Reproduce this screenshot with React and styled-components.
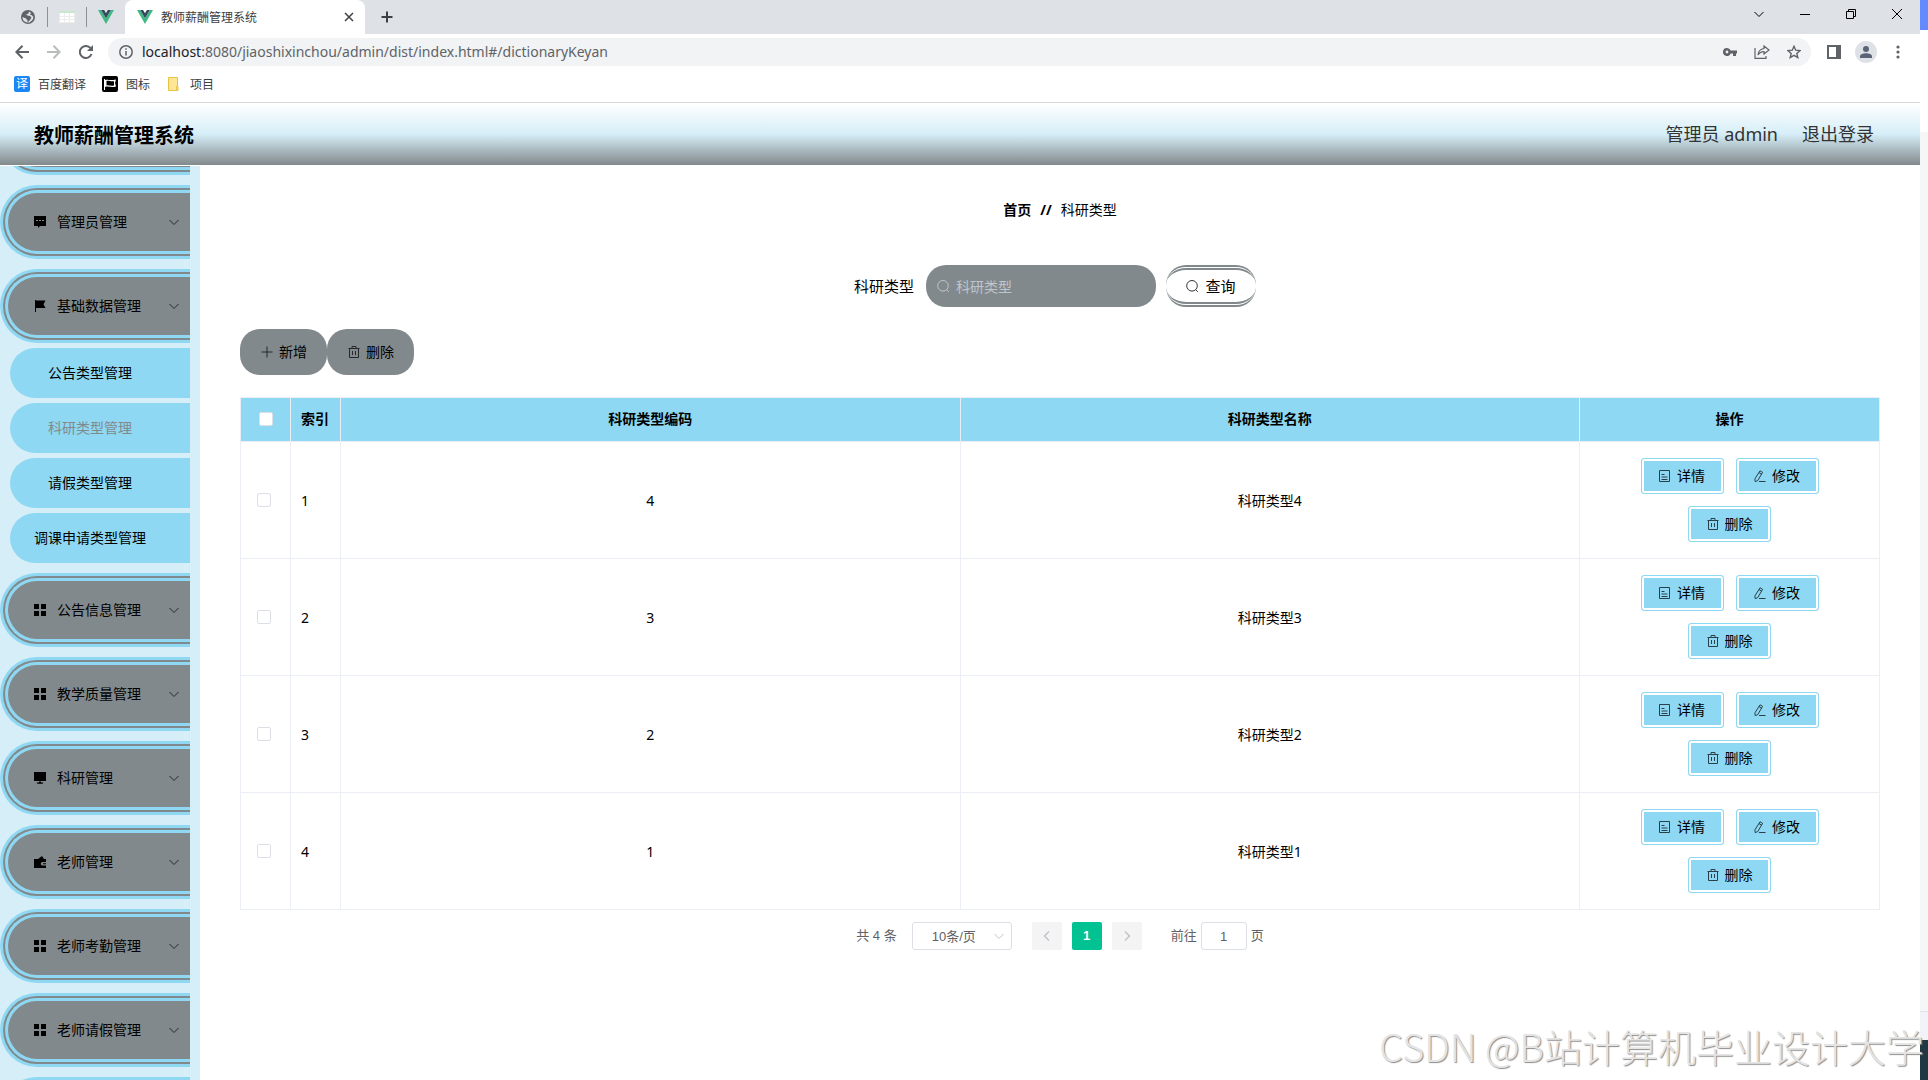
import React, { useEffect, useRef } from 'react'
import styled, { createGlobalStyle } from 'styled-components'

const menus = [
  { name: '', label: '个人中心', icon: '' },
  { name: '管理员管理', icon: 'chat' },
  {
    name: '基础数据管理',
    icon: 'flag',
    children: ['公告类型管理', '科研类型管理', '请假类型管理', '调课申请类型管理'],
  },
  { name: '公告信息管理', icon: 'grid' },
  { name: '教学质量管理', icon: 'grid' },
  { name: '科研管理', icon: 'monitor' },
  { name: '老师管理', icon: 'wallet' },
  { name: '老师考勤管理', icon: 'grid' },
  { name: '老师请假管理', icon: 'grid' },
  { name: '', label: '老师薪资管理', icon: '' },
]

const rows = [
  { id: 1, code: 4, name: '科研类型4' },
  { id: 2, code: 3, name: '科研类型3' },
  { id: 3, code: 2, name: '科研类型2' },
  { id: 4, code: 1, name: '科研类型1' },
]

// filled icons of the side menu, 12 x 12
const menuIcons = {
  grid: <path d="M0 0h5v5H0zM7 0h5v5H7zM0 7h5v5H0zM7 7h5v5H7z" />,
  chat: (
    <>
      <path d="M0 0h12v10H6l-2 2v-2H0z" />
      <path d="M2 4h2v1H2zM5 4h2v1H5zM8 4h2v1H8z" fill="#82898c" />
    </>
  ),
  flag: <path d="M1 0h1v12H1zM2 0.5h9.5L9.5 4.2l2 3.8H2z" />,
  monitor: <path d="M0 0h12v9H0zM5 9.500h2v1h2v1.200H3v-1.200h2z" />,
  wallet: <path d="M0 3h4l4-3 2 3h2v3H8.500a1.500 1.500 0 0 0 0 3.500H12V12H0zM9 7.200h3v1H9z" />,
}

function MenuIcon({ type }) {
  return (
    <svg width="12" height="12" viewBox="0 0 12 12" aria-hidden="true">
      {menuIcons[type]}
    </svg>
  )
}

const linePaths = {
  plus: 'M6 0.500v11M0.500 6h11',
  trash: 'M0.500 2.500h11M4 2.500v-2h4v2M1.500 2.500v9h9v-9M4.500 5v4M7.500 5v4',
  doc: 'M0.500 0.500h10v11h-10zM2.500 4.500h3M2.500 7h6M2.500 9.500h6',
  edit: 'M6 0.800l2.600 1.500-4.800 8.200-2.600 1.200-.3-2.800zM5 2.600l2.600 1.500M5 11.500h6.500',
  search: 'M6 0.500a5.300 5.300 0 1 1 0 10.600a5.300 5.300 0 1 1 0-10.600M9.800 9.800l2 2',
  down: 'M1.500 4l4.500 4.500L10.500 4',
  left: 'M8 1.500L3.500 6L8 10.500',
  right: 'M4 1.500L8.500 6L4 10.500',
  close: 'M2 2l8 8M10 2l-8 8',
}

function LineIcon({ type, size = 12, width = 1, opacity = 1 }) {
  return (
    <svg width={size} height={size} viewBox="0 0 12 12" fill="none" stroke="currentColor" strokeWidth={width} opacity={opacity} aria-hidden="true">
      <path d={linePaths[type]} />
    </svg>
  )
}

function VueLogo() {
  return (
    <svg width="16" height="14" viewBox="0 0 16 14" aria-hidden="true">
      <path d="M0 0h3.200L8 8.300L12.800 0H16L8 14z" fill="#41b883" />
      <path d="M3.200 0H6.100L8 3.300L9.900 0h2.900L8 8.300z" fill="#35495e" />
    </svg>
  )
}

function Browser() {
  return (
    <>
      <TabBar>
        <PinnedTab>
          <svg width="14" height="14" viewBox="0 0 14 14" aria-hidden="true">
            <circle cx="7" cy="7" r="7" fill="#5f6368" />
            <path d="M8 1.500l-.5 2L5 4.500l1.500 1L9 6l1.500 1.500L9 10l-2.500 2.500v-2L5 8.500 1.500 7A5.600 5.600 0 0 0 6 12.500h2.500l3-2.500 1-3-2-2H9L10 3z" fill="#dee1e6" />
          </svg>
        </PinnedTab>
        <PinnedTab>
          <svg width="16" height="12" viewBox="0 0 16 12" aria-hidden="true">
            <path d="M0 0h16v12H0z" fill="#fff" />
            <path d="M0 0h16v2H0z" fill="#c9e6cf" />
            <path d="M0.500 2v9.500h15V2M0 5.500h16M0 8.500h16M5.500 2v10M10.500 2v10" fill="none" stroke="#ececec" />
          </svg>
        </PinnedTab>
        <PinnedTab $last>
          <VueLogo />
        </PinnedTab>
        <ActiveTab>
          <VueLogo />
          <TabTitle>教师薪酬管理系统</TabTitle>
          <PlainButton aria-label="关闭标签页">
            <LineIcon type="close" width={1.5} />
          </PlainButton>
        </ActiveTab>
        <NewTab aria-label="新标签页">
          <LineIcon type="plus" width={2} />
        </NewTab>
        <WindowButtons>
          <WindowButton aria-label="搜索标签页">
            <LineIcon type="down" />
          </WindowButton>
          <WindowButton aria-label="最小化">
            <svg width="10" height="10" viewBox="0 0 10 10"><path d="M0 5h10v1H0z" /></svg>
          </WindowButton>
          <WindowButton aria-label="还原">
            <svg width="10" height="10" viewBox="0 0 10 10" fill="none" stroke="#000">
              <path d="M0.500 2.500h7v7h-7zM2.500 2.500v-2h7v7h-2" />
            </svg>
          </WindowButton>
          <WindowButton aria-label="关闭">
            <svg width="10" height="10" viewBox="0 0 10 10" stroke="#000"><path d="M0 0l10 10M10 0L0 10" /></svg>
          </WindowButton>
        </WindowButtons>
      </TabBar>
      <Toolbar>
        <ToolButton aria-label="后退">
          <svg width="14" height="14" viewBox="0 0 14 14" fill="none" stroke="#5f6368" strokeWidth="2"><path d="M14 7H1.500M7.500 0.800L1.400 7l6.100 6.200" /></svg>
        </ToolButton>
        <ToolButton aria-label="前进">
          <svg width="14" height="14" viewBox="0 0 14 14" fill="none" stroke="#babcbe" strokeWidth="2"><path d="M0 7h12.500M6.500 0.800L12.600 7l-6.100 6.200" /></svg>
        </ToolButton>
        <ToolButton aria-label="刷新">
          <svg width="14" height="14" viewBox="0 0 14 14"><path d="M12.500 9A6 6 0 1 1 11.500 3.200" fill="none" stroke="#5f6368" strokeWidth="2" /><path d="M14 0v6H8z" fill="#5f6368" /></svg>
        </ToolButton>
        <AddressBar>
          <svg width="14" height="14" viewBox="0 0 14 14" fill="none" stroke="#5f6368" strokeWidth="1.500" aria-hidden="true">
            <circle cx="7" cy="7" r="6.200" />
            <path d="M7 6v4.500M7 3.300v1.500" />
          </svg>
          <Url>
            <b>localhost</b>:8080/jiaoshixinchou/admin/dist/index.html#/dictionaryKeyan
          </Url>
          <ToolButton aria-label="密码">
            <svg width="14" height="8" viewBox="0 0 14 8" fill="#5f6368"><path fillRule="evenodd" d="M4 0a4 4 0 0 1 3.700 2.600H14v2.800h-1V8h-3V5.400H7.700A4 4 0 1 1 4 0zM4 2.600a1.400 1.400 0 1 0 0 2.800a1.400 1.400 0 1 0 0-2.800z" /></svg>
          </ToolButton>
          <ToolButton aria-label="分享">
            <svg width="16" height="14" viewBox="0 0 16 14" fill="none" stroke="#5f6368" strokeWidth="1.200"><path d="M1 3v10.400h11V11M10 1l5 4-5 4V6.700C7 6.700 5.500 7.500 4 10c.3-3.500 2.500-6 6-6.500z" /></svg>
          </ToolButton>
          <ToolButton aria-label="收藏">
            <svg width="14" height="14" viewBox="0 0 14 14" fill="none" stroke="#5f6368" strokeWidth="1.400"><path d="M7 1.300l1.700 3.900 4.300.4-3.200 2.800 1 4.200L7 10.400l-3.800 2.200 1-4.200L1 5.600l4.300-.4z" /></svg>
          </ToolButton>
        </AddressBar>
        <ToolButton aria-label="侧边栏">
          <svg width="14" height="14" viewBox="0 0 14 14"><path d="M0 0h14v14H0z" fill="#5f6368" /><path d="M2 2h7v10H2z" fill="#fff" /></svg>
        </ToolButton>
        <ToolButton aria-label="用户">
          <svg width="22" height="22" viewBox="0 0 22 22"><circle cx="11" cy="11" r="11" fill="#dee1e6" /><circle cx="11" cy="8" r="3" fill="#5a6378" /><path d="M5 17v-1.500c0-2 3-3.200 6-3.200s6 1.200 6 3.200V17z" fill="#5a6378" /></svg>
        </ToolButton>
        <ToolButton aria-label="更多">
          <svg width="4" height="14" viewBox="0 0 4 14" fill="#5f6368"><circle cx="2" cy="2" r="1.600" /><circle cx="2" cy="7" r="1.600" /><circle cx="2" cy="12" r="1.600" /></svg>
        </ToolButton>
      </Toolbar>
      <Bookmarks>
        <Bookmark href="#fanyi">
          <Badge>译</Badge>
          百度翻译
        </Bookmark>
        <Bookmark href="#tubiao">
          <svg width="16" height="16" viewBox="0 0 16 16" aria-hidden="true">
            <rect width="16" height="16" rx="2" />
            <path d="M2.500 3v11" stroke="#fff" />
            <path d="M3 4c3-1 4 .8 11-.5l-1 3.500 1 3.500c-5 1.500-7-.8-11 .5z" fill="#fff" />
            <path d="M4.500 5c2.500-.6 4 .8 7.500.2v4.300c-3.500.6-5-.6-7.500 0z" />
          </svg>
          图标
        </Bookmark>
        <Bookmark href="#xiangmu">
          <svg width="16" height="16" viewBox="0 0 16 16" aria-hidden="true">
            <path d="M2.500 1.500h9v13h-9z" fill="#ffe694" stroke="#e8c34c" />
            <path d="M10.500 14.500v-4h1.500v4z" fill="#ffe694" stroke="#e8c34c" />
          </svg>
          项目
        </Bookmark>
      </Bookmarks>
    </>
  )
}

function Sidebar() {
  const ref = useRef(null)

  useEffect(() => {
    ref.current.scrollTop = 65
  }, [])

  return (
    <Aside ref={ref}>
      {menus.map((item) => (
        <MenuGroup key={item.name || item.label}>
          <MenuButton aria-label={item.label}>
            <MenuIcon type={item.icon} />
            <MenuText>{item.name}</MenuText>
            <LineIcon type="down" opacity={0.7} />
          </MenuButton>
          {item.children &&
            item.children.map((child) => (
              <SubLink href="#/dictionaryKeyan" key={child} $active={child === '科研类型管理'}>
                {child}
              </SubLink>
            ))}
        </MenuGroup>
      ))}
    </Aside>
  )
}

function DataTable() {
  return (
    <Table>
      <colgroup>
        <Col $width="50px" />
        <Col $width="50px" />
        <Col />
        <Col />
        <Col $width="300px" />
      </colgroup>
      <thead>
        <tr>
          <Th $left>
            <CheckBox type="checkbox" aria-label="全选" />
          </Th>
          <Th $left>索引</Th>
          <Th>科研类型编码</Th>
          <Th>科研类型名称</Th>
          <Th>操作</Th>
        </tr>
      </thead>
      <tbody>
        {rows.map((row) => (
          <tr key={row.id}>
            <Td $left>
              <CheckBox type="checkbox" aria-label={row.name} />
            </Td>
            <Td $left>{row.id}</Td>
            <Td>{row.code}</Td>
            <Td>{row.name}</Td>
            <Td>
              <Operations>
                <RowButton><LineIcon type="doc" opacity={0.7} />详情</RowButton>
                <RowButton><LineIcon type="edit" opacity={0.7} />修改</RowButton>
                <RowButton><LineIcon type="trash" opacity={0.7} />删除</RowButton>
              </Operations>
            </Td>
          </tr>
        ))}
      </tbody>
    </Table>
  )
}

function Pagination() {
  return (
    <Pager>
      <span>共 4 条</span>
      <SizeBox>
        <SizeSelect aria-label="每页条数" defaultValue="10">
          <option value="10">10条/页</option>
          <option value="20">20条/页</option>
        </SizeSelect>
        <LineIcon type="down" />
      </SizeBox>
      <PageButtons>
        <PageButton aria-label="上一页" disabled><LineIcon type="left" width={1.5} /></PageButton>
        <PageButton $active>1</PageButton>
        <PageButton aria-label="下一页" disabled><LineIcon type="right" width={1.5} /></PageButton>
      </PageButtons>
      <JumpLabel>
        前往
        <JumpInput defaultValue="1" />
        页
      </JumpLabel>
    </Pager>
  )
}

function App() {
  return (
    <Screen>
      <GlobalStyle />
      <Window>
        <Browser />
        <Header>
          <Title>教师薪酬管理系统</Title>
          <HeaderRight>
            <span>管理员 admin</span>
            <HeaderLink href="#/login">退出登录</HeaderLink>
          </HeaderRight>
        </Header>
        <Body>
          <Sidebar />
          <Main>
            <Breadcrumb>
              <b>首页</b>
              <b>//</b>
              <span>科研类型</span>
            </Breadcrumb>
            <SearchForm onSubmit={(e) => e.preventDefault()}>
              <SearchLabel htmlFor="keyword">科研类型</SearchLabel>
              <SearchBox>
                <LineIcon type="search" />
                <SearchInput id="keyword" placeholder="科研类型" />
              </SearchBox>
              <SearchButton><LineIcon type="search" opacity={0.8} />查询</SearchButton>
            </SearchForm>
            <Actions>
              <ActionButton><LineIcon type="plus" opacity={0.7} />新增</ActionButton>
              <ActionButton><LineIcon type="trash" opacity={0.7} />删除</ActionButton>
            </Actions>
            <DataTable />
            <Pagination />
          </Main>
        </Body>
      </Window>
      <Edge>
        <EdgeBlock $color="#638bff" $height="30px" />
        <EdgeBlock $color="#ffffff" $height="102px" />
        <EdgeBlock $color="#f5f6f7" />
        <EdgeBlock $color="#e2e3e6" $height="1px" />
        <EdgeBlock $color="#f2f3f8" $height="28px" />
        <EdgeBlock $color="#203843" $height="40px" />
      </Edge>
      <Watermark>CSDN @B站计算机毕业设计大学</Watermark>
    </Screen>
  )
}

export default App

const GlobalStyle = createGlobalStyle`
  * {
    box-sizing: border-box;
  }
  body {
    margin: 0;
    font-family: "Noto Sans", "Noto Sans CJK SC", sans-serif;
    font-size: 14px;
    color: #000;
    background: #fff;
  }
  button, input, select {
    font-family: inherit;
    margin: 0;
  }
  button {
    cursor: pointer;
    line-height: 18px;
  }
  svg {
    flex: none;
  }
`

const Screen = styled.div`
  position: relative;
  display: flex;
  height: 100vh;
  overflow: hidden;
`
const Window = styled.div`
  flex: 1;
  min-width: 0;
  display: flex;
  flex-direction: column;
`
const Edge = styled.div`
  width: 8px;
  display: flex;
  flex-direction: column;
`
const EdgeBlock = styled.div`
  height: ${(p) => p.$height || 'auto'};
  flex: ${(p) => (p.$height ? 'none' : 1)};
  background: ${(p) => p.$color};
`
const Watermark = styled.div`
  position: absolute;
  right: 4px;
  bottom: 6px;
  font-family: "Noto Sans CJK SC", sans-serif;
  font-size: 38px;
  line-height: 56px;
  font-weight: 300;
  color: #e4e4e4;
  text-shadow: 1px 1px 1px #8c8c8c;
  white-space: nowrap;
  pointer-events: none;
`

const TabBar = styled.div`
  display: flex;
  align-items: center;
  height: 34px;
  padding-left: 9px;
  background: #dee1e6;
`
const PinnedTab = styled.div`
  display: flex;
  align-items: center;
  justify-content: center;
  width: ${(p) => (p.$last ? '38px' : '39px')};
  height: 20px;
  border-right: ${(p) => (p.$last ? 'none' : '1px solid #8d9095')};
`
const ActiveTab = styled.div`
  display: flex;
  align-items: center;
  gap: 8px;
  width: 240px;
  height: 34px;
  padding: 0 10px 0 12px;
  background: #fff;
  border-radius: 8px 8px 0 0;
`
const TabTitle = styled.span`
  flex: 1;
  font-size: 12px;
  color: #3c4043;
`
const PlainButton = styled.button`
  display: flex;
  align-items: center;
  justify-content: center;
  padding: 0;
  border: 0;
  background: none;
  color: #3c4043;
`
const NewTab = styled(PlainButton)`
  width: 28px;
  height: 28px;
  margin-left: 8px;
`
const WindowButtons = styled.div`
  display: flex;
  margin-left: auto;
  margin-bottom: 6px;
`
const WindowButton = styled(PlainButton)`
  width: 46px;
  height: 28px;
  color: #000;
`

const Toolbar = styled.div`
  display: flex;
  align-items: center;
  height: 36px;
  padding: 0 6px;
`
const ToolButton = styled(PlainButton)`
  width: 32px;
  height: 28px;
`
const AddressBar = styled.div`
  flex: 1;
  display: flex;
  align-items: center;
  height: 28px;
  margin: 0 7px 0 6px;
  padding: 0 1px 0 11px;
  border-radius: 14px;
  background: #f1f3f4;
`
const Url = styled.span`
  flex: 1;
  margin-left: 9px;
  font-size: 14px;
  line-height: 18px;
  color: #5f6368;

  b {
    font-weight: 400;
    color: #202124;
  }
`
const Bookmarks = styled.div`
  display: flex;
  align-items: center;
  gap: 16px;
  height: 33px;
  padding: 0 14px 4px;
  border-bottom: 1px solid #d5d7da;
`
const Bookmark = styled.a`
  display: flex;
  align-items: center;
  gap: 8px;
  font-size: 12px;
  color: #3c4043;
  text-decoration: none;
`
const Badge = styled.span`
  width: 16px;
  height: 16px;
  border-radius: 2px;
  background: #1a87f5;
  color: #fff;
  line-height: 16px;
  text-align: center;
`

const Header = styled.header`
  display: flex;
  align-items: center;
  justify-content: space-between;
  height: 62px;
  padding: 0 46px 0 34px;
  background: linear-gradient(#fff, #d6eef8 50%, #82898c);
`
const Title = styled.h1`
  margin: 0;
  font-size: 20px;
  font-weight: 700;
`
const HeaderRight = styled.div`
  display: flex;
  gap: 24px;
  font-size: 18px;
  line-height: 24px;
  color: #333;
`
const HeaderLink = styled.a`
  color: #333;
  text-decoration: none;
`

const Body = styled.div`
  flex: 1;
  display: flex;
  min-height: 0;
  margin-top: 1px;
`
const Aside = styled.nav`
  width: 200px;
  padding-right: 10px;
  overflow-y: scroll;
  scrollbar-width: none;
  background: #d6eef8;
`
const MenuGroup = styled.div`
  margin-bottom: 10px;
`
const MenuButton = styled.button`
  display: flex;
  align-items: center;
  width: 100%;
  height: 74px;
  padding: 0 10px 0 26px;
  border: 8px double #8ed8f3;
  border-right: 0;
  border-radius: 37px 0 0 37px;
  background: #82898c;
  font-size: 14px;
  color: #000;
`
const MenuText = styled.span`
  flex: 1;
  margin-left: 11px;
  text-align: left;
`
const SubLink = styled.a`
  display: block;
  height: 50px;
  margin: 5px 0 0 10px;
  padding-right: 20px;
  border-radius: 25px 0 0 25px;
  background: #8ed8f3;
  color: ${(p) => (p.$active ? '#82898c' : '#000')};
  line-height: 50px;
  text-align: center;
  text-decoration: none;
`

const Main = styled.main`
  flex: 1;
  min-width: 0;
  padding: 34px 40px;
`
const Breadcrumb = styled.div`
  display: flex;
  justify-content: center;
  gap: 9px;
  line-height: 20px;
`
const SearchForm = styled.form`
  display: flex;
  align-items: center;
  justify-content: center;
  margin: 45px 10px 0 0;
`
const SearchLabel = styled.label`
  margin-right: 12px;
  font-size: 15px;
  line-height: 20px;
`
const SearchBox = styled.div`
  display: flex;
  align-items: center;
  gap: 5px;
  width: 230px;
  height: 42px;
  margin-right: 10px;
  padding: 0 11px;
  border-radius: 20px;
  background: #82898c;
  color: #c0c4cc;
`
const SearchInput = styled.input`
  flex: 1;
  min-width: 0;
  height: 18px;
  border: 0;
  outline: 0;
  background: none;
  font-size: 14px;

  &::placeholder {
    color: #c0c4cc;
  }
`
const SearchButton = styled.button`
  display: flex;
  align-items: center;
  justify-content: center;
  gap: 7px;
  width: 90px;
  height: 42px;
  padding: 0;
  border: 0 solid #82898c;
  border-top: 5px double #82898c;
  border-bottom: 5px double #82898c;
  border-radius: 20px;
  background: #fff;
  font-size: 15px;
  color: #000;
`
const Actions = styled.div`
  display: flex;
  margin: 22px 0;
`
const ActionButton = styled.button`
  display: flex;
  align-items: center;
  gap: 6px;
  height: 46px;
  padding: 0 20px 0 21px;
  border: 0;
  border-radius: 20px;
  background: #82898c;
  font-size: 14px;
  color: #000;
`

const Table = styled.table`
  width: 100%;
  table-layout: fixed;
  border-collapse: collapse;
`
const Col = styled.col`
  width: ${(p) => p.$width || 'auto'};
`
const Th = styled.th`
  height: 44px;
  padding: 0 0 2px ${(p) => (p.$left ? '10px' : '0')};
  border: 1px solid #ebeef5;
  background: #8ed8f3;
  line-height: 18px;
  text-align: ${(p) => (p.$left ? 'left' : 'center')};

  &:first-child {
    padding-left: 18px;
  }
`
const Td = styled.td`
  height: 117px;
  padding: 0 0 0 ${(p) => (p.$left ? '10px' : '0')};
  border: 1px solid #ebeef5;
  text-align: ${(p) => (p.$left ? 'left' : 'center')};

  &:first-child {
    padding-left: 16px;
  }
`
const CheckBox = styled.input`
  appearance: none;
  display: block;
  width: 14px;
  height: 14px;
  border: 1px solid #dcdfe6;
  border-radius: 2px;
  background: #fff;
`
const Operations = styled.div`
  display: flex;
  flex-wrap: wrap;
  justify-content: center;
  gap: 12px;
  padding: 0 50px;
`
const RowButton = styled.button`
  display: flex;
  align-items: center;
  justify-content: center;
  gap: 6px;
  width: 83px;
  height: 36px;
  padding: 0;
  border: 1px solid #8ed8f3;
  border-radius: 3px;
  background: #8ed8f3;
  box-shadow: inset 0 0 0 2px #fff;
  font-size: 14px;
  color: #000;
`

const Pager = styled.div`
  display: flex;
  align-items: center;
  justify-content: center;
  margin-top: 12px;
  font-family: "Liberation Sans", "Noto Sans CJK SC", sans-serif;
  font-size: 13px;
  line-height: 18px;
  color: #606266;
`
const SizeBox = styled.div`
  display: flex;
  align-items: center;
  width: 100px;
  height: 28px;
  margin: 0 20px 0 15px;
  padding-right: 6px;
  border: 1px solid #dcdfe6;
  border-radius: 3px;
  color: #c0c4cc;
`
const SizeSelect = styled.select`
  appearance: none;
  flex: 1;
  min-width: 0;
  height: 26px;
  padding: 0 0 0 19px;
  border: 0;
  background: none;
  font-size: 13px;
  color: #606266;
`
const PageButtons = styled.div`
  display: flex;
  gap: 10px;
`
const PageButton = styled.button`
  display: flex;
  align-items: center;
  justify-content: center;
  width: 30px;
  height: 28px;
  padding: 0;
  border: 0;
  border-radius: 2px;
  background: ${(p) => (p.$active ? '#00c292' : '#f4f4f5')};
  color: ${(p) => (p.$active ? '#fff' : '#c0c4cc')};
  font-size: 13px;
  font-weight: 700;
`
const JumpLabel = styled.label`
  display: flex;
  align-items: center;
  gap: 4px;
  margin-left: 29px;
`
const JumpInput = styled.input`
  width: 46px;
  height: 28px;
  padding: 0;
  border: 1px solid #dcdfe6;
  border-radius: 3px;
  font-size: 13px;
  color: #606266;
  text-align: center;
`
